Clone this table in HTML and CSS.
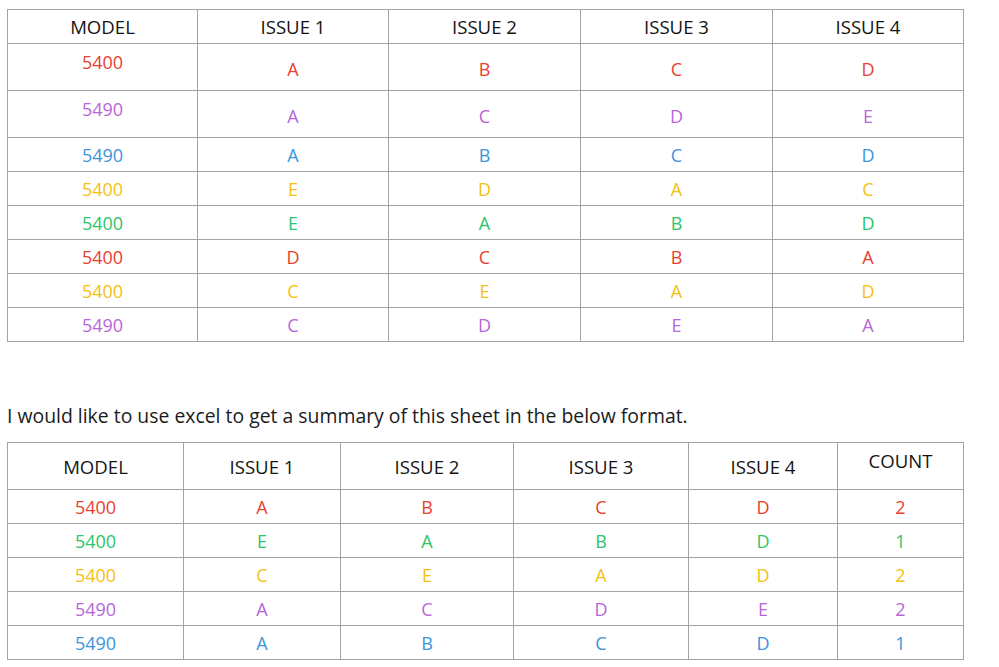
FILE: index.html
```
<!DOCTYPE html>
<html>
<head>
<meta charset="utf-8">
<link rel="stylesheet" href="styles.css">
</head>
<body>
<table class="grid first">
  <colgroup><col class="c1"><col class="c2"><col class="c3"><col class="c4"><col class="c5"></colgroup>
  <tr class="head"><td>MODEL</td><td>ISSUE 1</td><td>ISSUE 2</td><td>ISSUE 3</td><td>ISSUE 4</td></tr>
  <tr class="tall red"><td class="hi">5400</td><td class="lo">A</td><td class="lo">B</td><td class="lo">C</td><td class="lo">D</td></tr>
  <tr class="tall purple"><td class="hi">5490</td><td class="lo">A</td><td class="lo">C</td><td class="lo">D</td><td class="lo">E</td></tr>
  <tr class="blue"><td>5490</td><td>A</td><td>B</td><td>C</td><td>D</td></tr>
  <tr class="yellow"><td>5400</td><td>E</td><td>D</td><td>A</td><td>C</td></tr>
  <tr class="green"><td>5400</td><td>E</td><td>A</td><td>B</td><td>D</td></tr>
  <tr class="red"><td>5400</td><td>D</td><td>C</td><td>B</td><td>A</td></tr>
  <tr class="yellow"><td>5400</td><td>C</td><td>E</td><td>A</td><td>D</td></tr>
  <tr class="purple"><td>5490</td><td>C</td><td>D</td><td>E</td><td>A</td></tr>
</table>
<p class="note">I would like to use excel to get a summary of this sheet in the below format.</p>
<table class="grid second">
  <colgroup><col class="d1"><col class="d2"><col class="d3"><col class="d4"><col class="d5"><col class="d6"></colgroup>
  <tr class="head2"><td>MODEL</td><td>ISSUE 1</td><td>ISSUE 2</td><td>ISSUE 3</td><td>ISSUE 4</td><td class="count">COUNT</td></tr>
  <tr class="red"><td>5400</td><td>A</td><td>B</td><td>C</td><td>D</td><td>2</td></tr>
  <tr class="green"><td>5400</td><td>E</td><td>A</td><td>B</td><td>D</td><td>1</td></tr>
  <tr class="yellow"><td>5400</td><td>C</td><td>E</td><td>A</td><td>D</td><td>2</td></tr>
  <tr class="purple"><td>5490</td><td>A</td><td>C</td><td>D</td><td>E</td><td>2</td></tr>
  <tr class="blue"><td>5490</td><td>A</td><td>B</td><td>C</td><td>D</td><td>1</td></tr>
</table>
</body>
</html>
```
FILE: styles.css
```
html, body {
  margin: 0;
  background: #ffffff;
}
body {
  padding: 9px 7px 0 7px;
  font-family: "Open Sans", "Noto Sans", sans-serif;
  font-size: 18px;
  color: #1b1b1b;
}
.grid {
  border-collapse: collapse;
  table-layout: fixed;
  width: 957px;
}
.grid td {
  border: 1px solid #a3a3a3;
  text-align: center;
  vertical-align: middle;
  padding: 5px 0 4px 0;
  line-height: 24px;
}
.first .c1 { width: 190px; }
.first .c2 { width: 191px; }
.first .c3 { width: 192px; }
.first .c4 { width: 192px; }
.first .c5 { width: 191px; }
.second .d1 { width: 176px; }
.second .d2 { width: 157px; }
.second .d3 { width: 173px; }
.second .d4 { width: 175px; }
.second .d5 { width: 149px; }
.second .d6 { width: 126px; }

.head td,
.head2 td {
  font-size: 18.6px;
  color: #141414;
}

.tall td { vertical-align: top; }
.tall td.hi { padding: 6px 0 16px 0; }
.tall td.lo { padding: 13px 0 9px 0; }

.head2 td { padding: 12px 0 10px 0; }
.head2 td.count {
  vertical-align: top;
  padding: 6px 0 16px 0;
}

.note {
  margin: 62px 0 14px 0;
  line-height: 24px;
  font-size: 19.4px;
  color: #1b1b1b;
}

.red td { color: #e8412f; }
.purple td { color: #b666d8; }
.blue td { color: #3a95dc; }
.yellow td { color: #f4c10f; }
.green td { color: #2ec46b; }
```
